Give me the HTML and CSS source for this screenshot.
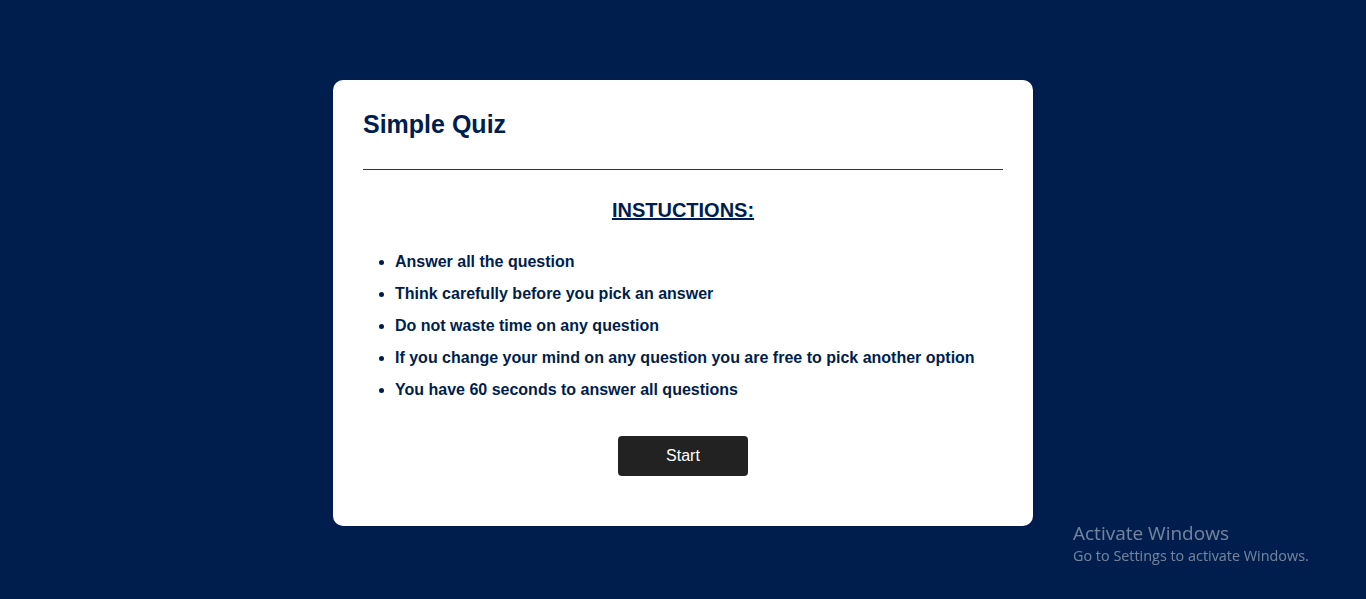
FILE: index.html
```html
<!DOCTYPE html>
<html lang="en">
<head>
<meta charset="utf-8">
<title>Simple Quiz</title>
<link rel="stylesheet" href="styles.css">
</head>
<body>
<main class="app">
  <h1 class="title">Simple Quiz</h1>
  <hr class="rule">
  <section class="instructions">
    <h2 class="instructions-head">INSTUCTIONS:</h2>
    <ul class="rules-list">
      <li>Answer all the question</li>
      <li>Think carefully before you pick an answer</li>
      <li>Do not waste time on any question</li>
      <li>If you change your mind on any question you are free to pick another option</li>
      <li>You have 60 seconds to answer all questions</li>
    </ul>
    <div class="actions">
      <button class="start-btn" type="button">Start</button>
    </div>
  </section>
</main>
<div class="watermark">
  <div class="wm-title">Activate Windows</div>
  <div class="wm-sub">Go to Settings to activate Windows.</div>
</div>
</body>
</html>
```

FILE: styles.css
```css
* { box-sizing: border-box; }
html, body { height: 100%; }
body {
  margin: 0;
  background: #001e4d;
  font-family: "Liberation Sans", Arial, sans-serif;
  color: #001e4d;
  overflow: hidden;
}
.app {
  width: 700px;
  margin: 80px auto 0;
  background: #fff;
  border-radius: 10px;
  padding: 30px 30px 50px;
}
.title {
  margin: 0;
  font-size: 25px;
  line-height: 29px;
  font-weight: 700;
}
.rule {
  margin: 30px 0 0;
  border: 0;
  border-top: 1px solid #333;
  height: 0;
}
.instructions-head {
  margin: 29px 0 0;
  text-align: center;
  font-size: 20px;
  line-height: 23px;
  text-decoration: underline;
  font-weight: 700;
}
.rules-list {
  margin: 31px 0 0;
  padding-left: 32px;
  font-size: 16px;
  font-weight: 700;
  line-height: 18px;
}
.rules-list li { margin-bottom: 14px; }
.rules-list li:last-child { margin-bottom: 0; }
.actions {
  display: flex;
  justify-content: center;
  margin-top: 37px;
}
.start-btn {
  width: 130px;
  height: 40px;
  background: #222;
  color: #fff;
  border: 0;
  border-radius: 4px;
  font-family: "Liberation Sans", Arial, sans-serif;
  font-size: 16px;
  cursor: pointer;
}
.watermark {
  position: fixed;
  left: 1073px;
  top: 520px;
  color: rgba(255,255,255,0.45);
  font-family: "Open Sans", "Noto Sans", sans-serif;
}
.wm-title { font-size: 19px; line-height: 26px; }
.wm-sub { font-size: 14.4px; line-height: 20px; }
```
